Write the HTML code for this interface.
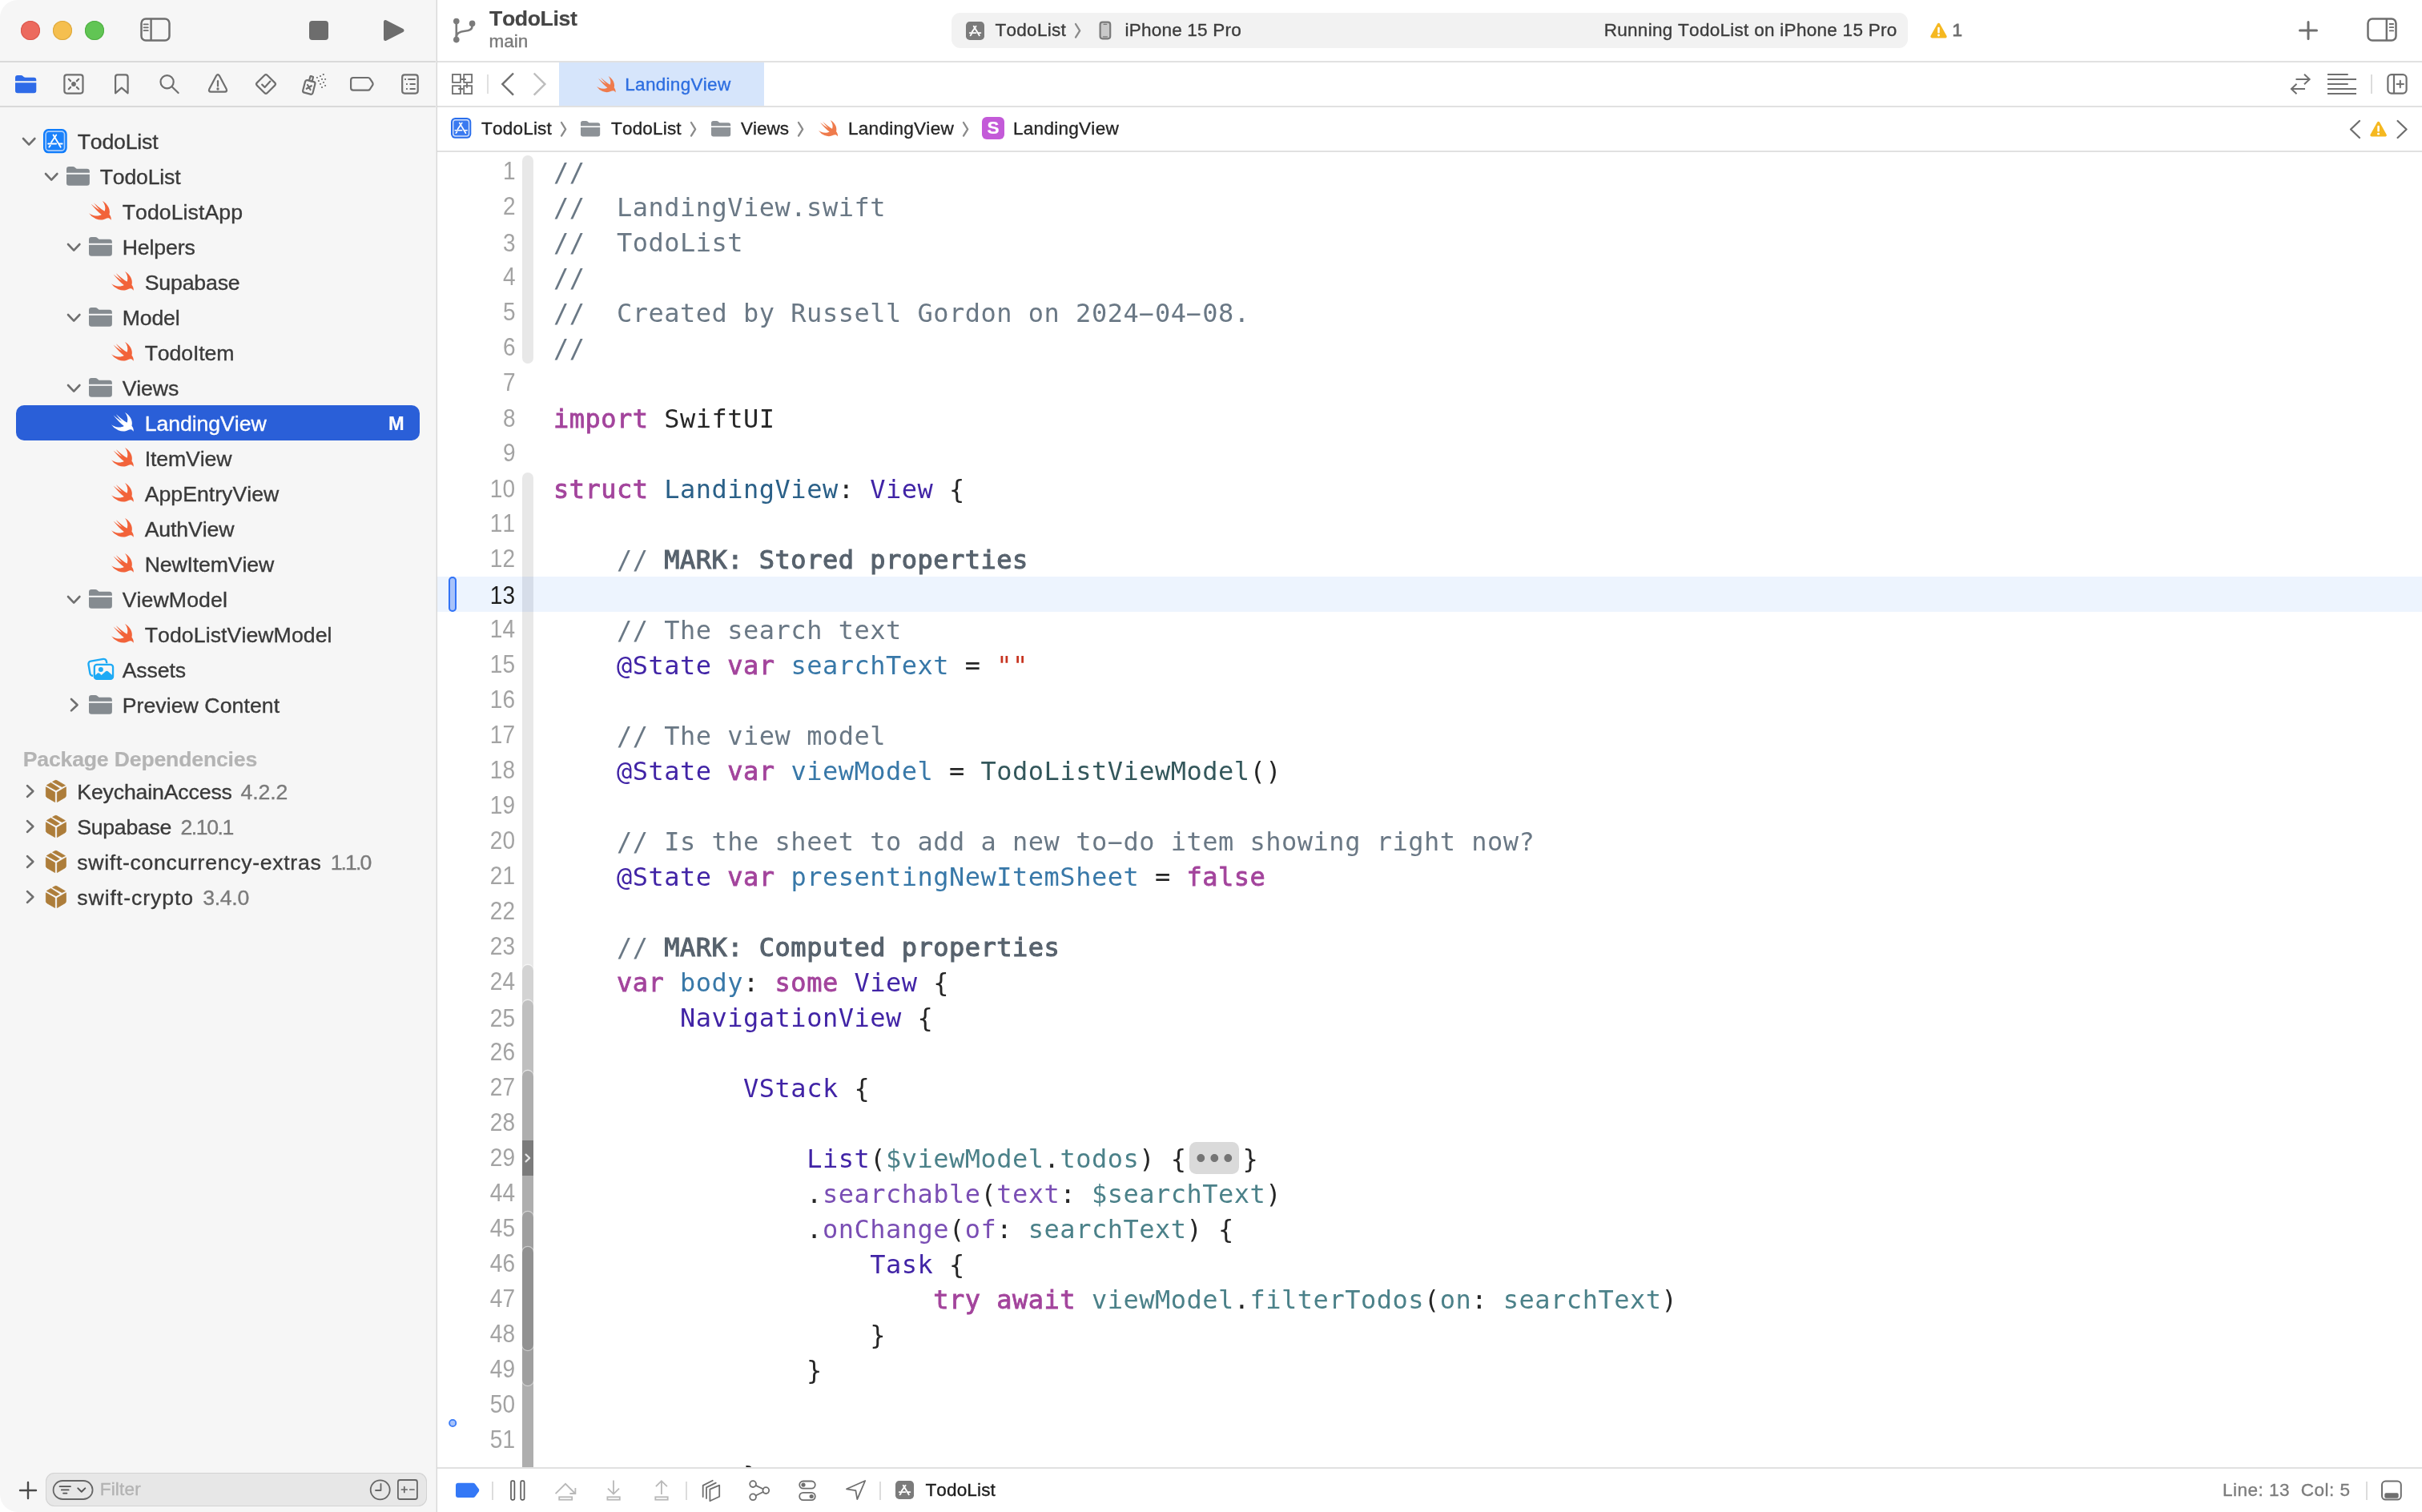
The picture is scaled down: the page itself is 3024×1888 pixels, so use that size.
<!DOCTYPE html>
<html lang="en"><head><meta charset="utf-8"><title>TodoList — LandingView.swift</title>
<style>
html,body{margin:0;padding:0;background:#fff;}
body{width:3024px;height:1888px;position:relative;overflow:hidden;font-family:"Liberation Sans",sans-serif;font-kerning:none;-webkit-font-smoothing:antialiased;}
.t{position:absolute;white-space:pre;}
.m{font-family:"DejaVu Sans Mono","Liberation Mono",monospace;}
svg{overflow:visible;}
#win{will-change:transform;position:absolute;left:0;top:0;width:3024px;height:1888px;border-radius:22px;overflow:hidden;background:#fff;}
.cl{position:absolute;left:0;white-space:pre;font-family:"DejaVu Sans Mono","Liberation Mono",monospace;font-size:32px;line-height:44px;height:44px;letter-spacing:0.499px;color:#262626;}
.cl b{font-weight:700;}
.hy{display:inline-block;transform:scaleX(2.0);}
.fold{display:inline-block;position:relative;width:69.9px;height:44px;vertical-align:top;letter-spacing:0;}
.fold i{position:absolute;left:3.6px;top:1px;width:62.2px;height:40px;border-radius:8.5px;background:#dadada;}
.fold em{position:absolute;left:11.6px;top:-1px;font:normal 36px/44px "Liberation Sans",sans-serif;letter-spacing:4.3px;color:#757575;}
.c{color:#6a7885}.mk{color:#57626d;font-weight:400;-webkit-text-stroke:1.1px #57626d}.k{color:#a3449c;font-weight:400;-webkit-text-stroke:0.8px #a3449c}.td{color:#2a6088}.od{color:#3878a8}
.st{color:#4124a6}.pc{color:#33575b}.pv{color:#4b8189}.sf{color:#7a4eb4}.s{color:#c7331f}
</style></head><body><div id="win">
<div style="position:absolute;left:0px;top:0px;width:545px;height:1888px;background:#f6f6f6;"></div>
<div style="position:absolute;left:544px;top:0px;width:1px;height:1888px;background:#ececec;"></div>
<div style="position:absolute;left:545px;top:0px;width:1px;height:1888px;background:#d6d6d6;"></div>
<div style="position:absolute;left:0px;top:76px;width:544px;height:2px;background:#d9d9d9;"></div>
<div style="position:absolute;left:546px;top:76px;width:2478px;height:2px;background:#e1e1e1;"></div>
<div style="position:absolute;left:0px;top:132px;width:544px;height:2px;background:#d9d9d9;"></div>
<div style="position:absolute;left:546px;top:132px;width:2478px;height:2px;background:#e1e1e1;"></div>
<div style="position:absolute;left:546px;top:188px;width:2478px;height:2px;background:#e1e1e1;"></div>
<div style="position:absolute;left:546px;top:1832px;width:2478px;height:2px;background:#e1e1e1;"></div>
<div style="position:absolute;left:26px;top:26px;width:24px;height:24px;background:#ec6a5e;border-radius:50%;box-shadow:inset 0 0 0 1px #d9574c;"></div>
<div style="position:absolute;left:66px;top:26px;width:24px;height:24px;background:#f5bf4f;border-radius:50%;box-shadow:inset 0 0 0 1px #dca73d;"></div>
<div style="position:absolute;left:106px;top:26px;width:24px;height:24px;background:#61c554;border-radius:50%;box-shadow:inset 0 0 0 1px #4fae43;"></div>
<svg style="position:absolute;left:175px;top:22px;" width="38" height="30" viewBox="0 0 38 30" preserveAspectRatio="none"><rect x="1.5" y="1.5" width="35" height="27" rx="5.5" fill="none" stroke="#6f6f6f" stroke-width="2.5"/><path d="M13.6,1.5 V28.5" stroke="#6f6f6f" stroke-width="2.4"/><path d="M4.6,8.4 H9.8 M4.6,12.3 H9.8 M4.6,16.2 H9.8" stroke="#6f6f6f" stroke-width="1.8" stroke-linecap="round"/></svg>
<div style="position:absolute;left:386px;top:26px;width:24px;height:24px;background:#6d6d6d;border-radius:4px;"></div>
<svg style="position:absolute;left:476px;top:22px;" width="32" height="32" viewBox="476 22 32 32" preserveAspectRatio="none"><path d="M481.2,27.2 L481.2,48.8 L502.3,38 Z" fill="#6d6d6d" stroke="#6d6d6d" stroke-width="4.4" stroke-linejoin="round"/></svg>
<svg style="position:absolute;left:562px;top:20px;" width="36" height="38" viewBox="562 20 36 38" preserveAspectRatio="none"><g fill="none" stroke="#7b7b7b" stroke-width="2.6" stroke-linecap="round"><path d="M569.8,27 V49"/><path d="M589.6,30 V32.4 C589.6,37 586,38.3 580.5,38.8 C574,39.4 569.8,40.8 569.8,46"/></g><circle cx="569.8" cy="26.6" r="3.8" fill="#7b7b7b"/><circle cx="589.6" cy="29.4" r="3.8" fill="#7b7b7b"/><circle cx="569.8" cy="49.6" r="3.8" fill="#7b7b7b"/></svg>
<span class="t " style="left:611.00px;top:-2.63px;font-size:26.65px;line-height:52px;color:#464646;font-weight:700;letter-spacing:-0.374px;-webkit-text-stroke:0.2px #464646;">TodoList</span>
<span class="t " style="left:610.50px;top:30.49px;font-size:22.55px;line-height:44px;color:#7a7a7a;font-weight:400;letter-spacing:-0.019px;-webkit-text-stroke:0.35px #7a7a7a;">main</span>
<div style="position:absolute;left:1188px;top:16px;width:1194px;height:44px;background:#f2f2f2;border-radius:11px;"></div>
<svg style="position:absolute;left:1206px;top:27px;" width="23" height="23" viewBox="0 0 30 30" preserveAspectRatio="none"><rect x="0" y="0" width="30" height="30" rx="6.2" fill="#7b7b7b"/><g transform="translate(15 15) scale(1.0) translate(-15 -14.9)"><g fill="none" stroke="#fff" stroke-width="2.5" stroke-linecap="round"><path d="M10.1,16.6 L16.4,7.4"/><path d="M7.4,22.3 L8.9,20.5"/><path d="M12.7,7.4 L21.9,22.4"/><path d="M6.2,18.3 H16.3"/><path d="M20.2,18.3 H23.9"/></g></g></svg>
<span class="t " style="left:1242.50px;top:15.99px;font-size:22.55px;line-height:44px;color:#3c3c3c;font-weight:400;letter-spacing:0.251px;-webkit-text-stroke:0.35px #3c3c3c;">TodoList</span>
<svg style="position:absolute;left:1341.2px;top:28.2px;" width="9.2" height="20.6" viewBox="-4.6 -10.3 9.2 20.6" preserveAspectRatio="none"><path d="M-2.6,-8.3 L2.6,0 L-2.6,8.3" fill="none" stroke="#8a8a8a" stroke-width="2.3" stroke-linecap="round" stroke-linejoin="round"/></svg>
<svg style="position:absolute;left:1372px;top:26px;" width="16" height="24" viewBox="0 0 16 24" preserveAspectRatio="none"><rect x="1.6" y="1.7" width="12.6" height="20.6" rx="3" fill="#c9c9c9" stroke="#7a7a7a" stroke-width="2.2"/><path d="M6,4.3 H9.8" stroke="#7a7a7a" stroke-width="1.2" stroke-linecap="round"/><path d="M5.3,19.8 H10.5" stroke="#7a7a7a" stroke-width="1.2" stroke-linecap="round"/></svg>
<span class="t " style="left:1404.50px;top:15.99px;font-size:22.55px;line-height:44px;color:#3c3c3c;font-weight:400;letter-spacing:0.198px;-webkit-text-stroke:0.35px #3c3c3c;">iPhone 15 Pro</span>
<span class="t " style="left:2002.70px;top:15.99px;font-size:22.55px;line-height:44px;color:#3c3c3c;font-weight:400;letter-spacing:0.264px;-webkit-text-stroke:0.35px #3c3c3c;">Running TodoList on iPhone 15 Pro</span>
<svg style="position:absolute;left:2409.6px;top:27.5px;" width="21" height="20.4" viewBox="0 0 21 20.4" preserveAspectRatio="none"><path d="M10.5,2.6 L18.9,17.6 H2.1 Z" fill="#f5b820" stroke="#f5b820" stroke-width="3.6" stroke-linejoin="round"/><path d="M10.5,6.9 V12.2" stroke="#fff" stroke-width="2.5" stroke-linecap="round"/><circle cx="10.5" cy="16" r="1.45" fill="#fff"/></svg>
<span class="t " style="left:2437.50px;top:15.99px;font-size:22.55px;line-height:44px;color:#6e6e6e;font-weight:400;letter-spacing:-0.306px;-webkit-text-stroke:0.8px #6e6e6e;">1</span>
<svg style="position:absolute;left:2868px;top:24px;" width="28" height="28" viewBox="-14 -14 28 28" preserveAspectRatio="none"><path d="M-10.5,0 H10.5 M0,-10.5 V10.5" stroke="#6f6f6f" stroke-width="3" stroke-linecap="round"/></svg>
<svg style="position:absolute;left:2955px;top:22px;" width="38" height="30" viewBox="0 0 38 30" preserveAspectRatio="none"><rect x="1.5" y="1.5" width="35" height="27" rx="5.5" fill="none" stroke="#6f6f6f" stroke-width="2.5"/><path d="M24.8,1.5 V28.5" stroke="#6f6f6f" stroke-width="2.4"/><path d="M28.6,8.0 H33.2 M28.6,12.2 H33.2 M28.6,16.4 H33.2" stroke="#6f6f6f" stroke-width="1.8" stroke-linecap="round"/></svg>
<svg style="position:absolute;left:18.7px;top:93.7px;" width="26.3" height="22.3" viewBox="0 0 26.3 22.3" preserveAspectRatio="none"><path d="M0,3 Q0,0 3,0 H7.2 Q8.6,0 9.6,0.9 L10.6,1.9 Q11.5,2.7 12.8,2.7 H23.3 Q26.3,2.7 26.3,5.7 V19.3 Q26.3,22.3 23.3,22.3 H3 Q0,22.3 0,19.3 Z" fill="#2f6be8"/><path d="M-1,8.3 H27.3" stroke="#f6f6f6" stroke-width="1.9" fill="none"/></svg>
<svg style="position:absolute;left:78px;top:91px;" width="28" height="28" viewBox="78 91 28 28" preserveAspectRatio="none"><rect x="80.4" y="93.3" width="23.1" height="23.3" rx="3" fill="none" stroke="#6f6f6f" stroke-width="2.2" stroke-linecap="round" stroke-linejoin="round"/><circle cx="92" cy="105" r="2.9" fill="#6f6f6f"/><path d="M85.8,98.8 L88.1,101.1 M98.2,98.8 L95.9,101.1 M85.8,111.2 L88.1,108.9 M98.2,111.2 L95.9,108.9" fill="none" stroke="#6f6f6f" stroke-width="2.2" stroke-linecap="round" stroke-linejoin="round" stroke-width="2"/></svg>
<svg style="position:absolute;left:141px;top:90px;" width="22" height="30" viewBox="141 90 22 30" preserveAspectRatio="none"><path d="M144.1,96 Q144.1,93.3 146.8,93.3 H156.9 Q159.6,93.3 159.6,96 V116.3 L151.85,109.7 L144.1,116.3 Z" fill="none" stroke="#6f6f6f" stroke-width="2.2" stroke-linecap="round" stroke-linejoin="round"/></svg>
<svg style="position:absolute;left:197px;top:90px;" width="30" height="30" viewBox="197 90 30 30" preserveAspectRatio="none"><circle cx="208.6" cy="102.2" r="8.1" fill="none" stroke="#6f6f6f" stroke-width="2.2" stroke-linecap="round" stroke-linejoin="round" stroke-width="2.4"/><path d="M214.9,108.5 L222.6,116" fill="none" stroke="#6f6f6f" stroke-width="2.2" stroke-linecap="round" stroke-linejoin="round" stroke-width="3.5"/></svg>
<svg style="position:absolute;left:258px;top:90px;" width="28" height="28" viewBox="258 90 28 28" preserveAspectRatio="none"><path d="M270.1,94.6 Q272,91.6 273.9,94.6 L282.6,110.9 Q284,114.5 280.7,114.6 H263.3 Q260,114.5 261.4,110.9 Z" fill="none" stroke="#6f6f6f" stroke-width="2.2" stroke-linecap="round" stroke-linejoin="round"/><path d="M272,101.2 V107.4" fill="none" stroke="#6f6f6f" stroke-width="2.2" stroke-linecap="round" stroke-linejoin="round" stroke-width="2.7"/><circle cx="272" cy="111" r="1.65" fill="#6f6f6f"/></svg>
<svg style="position:absolute;left:317px;top:90px;" width="30" height="30" viewBox="317 90 30 30" preserveAspectRatio="none"><path d="M330.3,94 Q332,92.3 333.7,94 L343.2,103.4 Q344.8,105 343.2,106.6 L333.7,116 Q332,117.7 330.3,116 L320.8,106.6 Q319.2,105 320.8,103.4 Z" fill="none" stroke="#6f6f6f" stroke-width="2.2" stroke-linecap="round" stroke-linejoin="round"/><path d="M327.2,105.6 L330.6,109 L337.4,101.6" fill="none" stroke="#6f6f6f" stroke-width="2.2" stroke-linecap="round" stroke-linejoin="round"/></svg>
<svg style="position:absolute;left:376px;top:90px;" width="34" height="30" viewBox="376 90 34 30" preserveAspectRatio="none"><g transform="rotate(14.6 385.8 108.9)"><rect x="379.45" y="100.9" width="12.7" height="16" rx="2.4" fill="none" stroke="#6f6f6f" stroke-width="2.2" stroke-linecap="round" stroke-linejoin="round"/><rect x="384.0" y="95.0" width="3.7" height="5.9" rx="0.6" fill="none" stroke="#6f6f6f" stroke-width="2.2" stroke-linecap="round" stroke-linejoin="round" stroke-width="1.9"/><path d="M383.3,106.5 L388.3,111.5 M388.3,106.5 L383.3,111.5" fill="none" stroke="#6f6f6f" stroke-width="2.2" stroke-linecap="round" stroke-linejoin="round" stroke-width="1.9"/></g><rect x="402.85" y="92.05" width="1.9" height="1.9" rx="0.4" fill="#6f6f6f"/><rect x="399.05" y="94.05" width="1.9" height="1.9" rx="0.4" fill="#6f6f6f"/><rect x="394.95" y="95.95" width="1.9" height="1.9" rx="0.4" fill="#6f6f6f"/><rect x="401.05" y="97.95" width="1.9" height="1.9" rx="0.4" fill="#6f6f6f"/><rect x="405.15000000000003" y="97.95" width="1.9" height="1.9" rx="0.4" fill="#6f6f6f"/><rect x="396.95" y="100.05" width="1.9" height="1.9" rx="0.4" fill="#6f6f6f"/><rect x="403.05" y="101.95" width="1.9" height="1.9" rx="0.4" fill="#6f6f6f"/><rect x="399.05" y="103.95" width="1.9" height="1.9" rx="0.4" fill="#6f6f6f"/><rect x="405.15000000000003" y="105.95" width="1.9" height="1.9" rx="0.4" fill="#6f6f6f"/><rect x="401.05" y="108.05" width="1.9" height="1.9" rx="0.4" fill="#6f6f6f"/></svg>
<svg style="position:absolute;left:435px;top:93px;" width="34" height="24" viewBox="435 93 34 24" preserveAspectRatio="none"><path d="M441,97 H459.6 Q461,97 461.8,98.1 L465.3,103.4 Q466,104.8 465.3,106.2 L461.8,111.5 Q461,112.6 459.6,112.6 H441 Q438.1,112.6 438.1,109.7 V99.9 Q438.1,97 441,97 Z" fill="none" stroke="#6f6f6f" stroke-width="2.2" stroke-linecap="round" stroke-linejoin="round"/></svg>
<svg style="position:absolute;left:499px;top:90px;" width="26" height="30" viewBox="499 90 26 30" preserveAspectRatio="none"><rect x="502.2" y="93.3" width="19.5" height="23.3" rx="3" fill="none" stroke="#6f6f6f" stroke-width="2.2" stroke-linecap="round" stroke-linejoin="round"/><path d="M509.3,99 H518.7 M511.6,105 H518.7 M511.6,111 H518.7" fill="none" stroke="#6f6f6f" stroke-width="1.9"/><rect x="505.1" y="98.05" width="1.9" height="1.9" fill="#6f6f6f"/><rect x="507" y="104.05" width="1.9" height="1.9" fill="#6f6f6f"/><rect x="507" y="110.05" width="1.9" height="1.9" fill="#6f6f6f"/></svg>
<svg style="position:absolute;left:562px;top:90px;" width="30" height="30" viewBox="562 90 30 30" preserveAspectRatio="none"><rect x="565" y="93" width="9.9" height="9.9" fill="none" stroke="#6f6f6f" stroke-width="1.8" stroke-linejoin="miter"/><rect x="579.2" y="93" width="9.9" height="9.9" fill="none" stroke="#6f6f6f" stroke-width="1.8" stroke-linejoin="miter"/><rect x="565" y="107.2" width="9.9" height="9.9" fill="none" stroke="#6f6f6f" stroke-width="1.8" stroke-linejoin="miter"/><rect x="579.2" y="107.2" width="9.9" height="9.9" fill="none" stroke="#6f6f6f" stroke-width="1.8" stroke-linejoin="miter"/><path d="M575.8,99 H581.8 M583,103.8 V109.8 M572.2,111 H578.3" fill="none" stroke="#6f6f6f" stroke-width="1.8" stroke-linejoin="miter"/></svg>
<div style="position:absolute;left:608.2px;top:93px;width:1.7px;height:24px;background:#e0e0e0;"></div>
<svg style="position:absolute;left:622px;top:88px;" width="24" height="34" viewBox="622 88 24 34" preserveAspectRatio="none"><path d="M641,91.5 L627.3,105.1 L641,118.7" fill="none" stroke="#6f6f6f" stroke-width="2.4" stroke-linecap="butt" stroke-linejoin="miter"/></svg>
<svg style="position:absolute;left:662px;top:88px;" width="24" height="34" viewBox="662 88 24 34" preserveAspectRatio="none"><path d="M666.7,91.5 L680.4,105.1 L666.7,118.7" fill="none" stroke="#bdbdbd" stroke-width="2.4" stroke-linecap="butt" stroke-linejoin="miter"/></svg>
<div style="position:absolute;left:698px;top:78px;width:256px;height:54px;background:#d6e5fb;"></div>
<svg style="position:absolute;left:745.3px;top:95px;" width="24" height="21.2" viewBox="2.4 3.4 18.4 17.0" preserveAspectRatio="none"><path d="M13.543 3.41c4.114 2.47 6.545 7.162 5.549 11.131-.024.093-.05.181-.076.272l.002.001c2.062 2.538 1.5 5.258 1.236 4.745-1.072-2.086-3.066-1.568-4.088-1.043a6.803 6.803 0 0 1-.281.158l-.02.012-.002.002c-2.115 1.123-4.957 1.205-7.812-.022a12.568 12.568 0 0 1-5.64-4.838c.649.48 1.35.902 2.097 1.252 3.019 1.414 6.051 1.311 8.197-.002C9.651 12.73 7.101 9.67 5.146 7.191a10.628 10.628 0 0 1-1.005-1.384c2.34 2.142 6.038 4.83 7.365 5.576C8.69 8.408 6.208 4.743 6.324 4.86c4.436 4.47 8.528 6.996 8.528 6.996.154.085.27.154.36.213.085-.215.16-.437.224-.668.708-2.588-.09-5.548-1.893-7.992z" fill="#ef7b4c"/></svg>
<span class="t " style="left:780.30px;top:83.69px;font-size:22.55px;line-height:44px;color:#2d6ee0;font-weight:400;letter-spacing:0.279px;-webkit-text-stroke:0.35px #2d6ee0;">LandingView</span>
<svg style="position:absolute;left:2858px;top:90px;" width="30" height="30" viewBox="2858 90 30 30" preserveAspectRatio="none"><path d="M2866.5,99 H2883.5 M2877,92.8 L2883.6,99 L2877,105.2 M2878,111 H2861 M2867.5,104.8 L2860.9,111 L2867.5,117.2" fill="none" stroke="#6f6f6f" stroke-width="2" stroke-linecap="butt" stroke-linejoin="miter"/></svg>
<svg style="position:absolute;left:2904px;top:90px;" width="40" height="30" viewBox="2904 90 40 30" preserveAspectRatio="none"><path d="M2906,93 H2931.7 M2906,99 H2942 M2906,105 H2931.7 M2906,111 H2942 M2906,117 H2942" fill="none" stroke="#6f6f6f" stroke-width="2"/></svg>
<div style="position:absolute;left:2960px;top:93px;width:2px;height:24px;background:#dcdcdc;"></div>
<svg style="position:absolute;left:2978px;top:90px;" width="30" height="30" viewBox="2978 90 30 30" preserveAspectRatio="none"><rect x="2981.4" y="93.2" width="23.2" height="23.4" rx="4.5" fill="none" stroke="#6f6f6f" stroke-width="2.2"/><path d="M2989,93.2 V116.6" stroke="#6f6f6f" stroke-width="2.2"/><path d="M2992.6,105 H3001 M2996.8,100.8 V109.2" stroke="#6f6f6f" stroke-width="2" stroke-linecap="round"/></svg>
<svg style="position:absolute;left:563.1px;top:147.4px;" width="25.3" height="25.8" viewBox="0 0 30 30" preserveAspectRatio="none"><rect x="0" y="0" width="30" height="30" rx="6.4" fill="#2a6eec"/><rect x="3.2" y="3.2" width="23.6" height="23.6" rx="3.6" fill="#3a7af0" stroke="#d4e2fb" stroke-width="1.7"/><g fill="none" stroke="#fff" stroke-width="1.9" stroke-linecap="round"><path d="M10.1,16.6 L16.4,7.4"/><path d="M7.4,22.3 L8.9,20.5"/><path d="M12.7,7.4 L21.9,22.4"/><path d="M6.2,18.3 H16.3"/><path d="M20.2,18.3 H23.9"/></g></svg>
<span class="t " style="left:601.00px;top:138.79px;font-size:22.55px;line-height:44px;color:#262626;font-weight:400;letter-spacing:0.189px;-webkit-text-stroke:0.35px #262626;">TodoList</span>
<svg style="position:absolute;left:698.9px;top:150.7px;" width="9.2" height="20.6" viewBox="-4.6 -10.3 9.2 20.6" preserveAspectRatio="none"><path d="M-2.6,-8.3 L2.6,0 L-2.6,8.3" fill="none" stroke="#8a8a8a" stroke-width="2.3" stroke-linecap="round" stroke-linejoin="round"/></svg>
<svg style="position:absolute;left:725.4px;top:150.5px;" width="24.2" height="19.4" viewBox="0 0 26.3 22.3" preserveAspectRatio="none"><path d="M0,3 Q0,0 3,0 H7.2 Q8.6,0 9.6,0.9 L10.6,1.9 Q11.5,2.7 12.8,2.7 H23.3 Q26.3,2.7 26.3,5.7 V19.3 Q26.3,22.3 23.3,22.3 H3 Q0,22.3 0,19.3 Z" fill="#8d9297"/><path d="M-1,8.3 H27.3" stroke="#fff" stroke-width="1.9" fill="none"/></svg>
<span class="t " style="left:763.00px;top:138.79px;font-size:22.55px;line-height:44px;color:#262626;font-weight:400;letter-spacing:0.164px;-webkit-text-stroke:0.35px #262626;">TodoList</span>
<svg style="position:absolute;left:861.4px;top:150.7px;" width="9.2" height="20.6" viewBox="-4.6 -10.3 9.2 20.6" preserveAspectRatio="none"><path d="M-2.6,-8.3 L2.6,0 L-2.6,8.3" fill="none" stroke="#8a8a8a" stroke-width="2.3" stroke-linecap="round" stroke-linejoin="round"/></svg>
<svg style="position:absolute;left:887.7px;top:150.5px;" width="24.2" height="19.4" viewBox="0 0 26.3 22.3" preserveAspectRatio="none"><path d="M0,3 Q0,0 3,0 H7.2 Q8.6,0 9.6,0.9 L10.6,1.9 Q11.5,2.7 12.8,2.7 H23.3 Q26.3,2.7 26.3,5.7 V19.3 Q26.3,22.3 23.3,22.3 H3 Q0,22.3 0,19.3 Z" fill="#8d9297"/><path d="M-1,8.3 H27.3" stroke="#fff" stroke-width="1.9" fill="none"/></svg>
<span class="t " style="left:924.90px;top:138.79px;font-size:22.55px;line-height:44px;color:#262626;font-weight:400;letter-spacing:-0.030px;-webkit-text-stroke:0.35px #262626;">Views</span>
<svg style="position:absolute;left:994.9px;top:150.7px;" width="9.2" height="20.6" viewBox="-4.6 -10.3 9.2 20.6" preserveAspectRatio="none"><path d="M-2.6,-8.3 L2.6,0 L-2.6,8.3" fill="none" stroke="#8a8a8a" stroke-width="2.3" stroke-linecap="round" stroke-linejoin="round"/></svg>
<svg style="position:absolute;left:1021.5px;top:150.3px;" width="24.4" height="21.2" viewBox="2.4 3.4 18.4 17.0" preserveAspectRatio="none"><path d="M13.543 3.41c4.114 2.47 6.545 7.162 5.549 11.131-.024.093-.05.181-.076.272l.002.001c2.062 2.538 1.5 5.258 1.236 4.745-1.072-2.086-3.066-1.568-4.088-1.043a6.803 6.803 0 0 1-.281.158l-.02.012-.002.002c-2.115 1.123-4.957 1.205-7.812-.022a12.568 12.568 0 0 1-5.64-4.838c.649.48 1.35.902 2.097 1.252 3.019 1.414 6.051 1.311 8.197-.002C9.651 12.73 7.101 9.67 5.146 7.191a10.628 10.628 0 0 1-1.005-1.384c2.34 2.142 6.038 4.83 7.365 5.576C8.69 8.408 6.208 4.743 6.324 4.86c4.436 4.47 8.528 6.996 8.528 6.996.154.085.27.154.36.213.085-.215.16-.437.224-.668.708-2.588-.09-5.548-1.893-7.992z" fill="#ef7b4c"/></svg>
<span class="t " style="left:1059.00px;top:138.79px;font-size:22.55px;line-height:44px;color:#262626;font-weight:400;letter-spacing:0.260px;-webkit-text-stroke:0.35px #262626;">LandingView</span>
<svg style="position:absolute;left:1201.2px;top:150.7px;" width="9.2" height="20.6" viewBox="-4.6 -10.3 9.2 20.6" preserveAspectRatio="none"><path d="M-2.6,-8.3 L2.6,0 L-2.6,8.3" fill="none" stroke="#8a8a8a" stroke-width="2.3" stroke-linecap="round" stroke-linejoin="round"/></svg>
<div style="position:absolute;left:1226px;top:146px;width:28px;height:28px;background:#c35ad8;border-radius:6px;"></div>
<span class="t " style="left:1232.60px;top:138.19px;font-size:22.55px;line-height:44px;color:#fff;font-weight:700;letter-spacing:-0.367px;-webkit-text-stroke:0.2px #fff;">S</span>
<span class="t " style="left:1265.00px;top:138.79px;font-size:22.55px;line-height:44px;color:#262626;font-weight:400;letter-spacing:0.260px;-webkit-text-stroke:0.35px #262626;">LandingView</span>
<svg style="position:absolute;left:2930px;top:146px;" width="22" height="32" viewBox="2930 146 22 32" preserveAspectRatio="none"><path d="M2946,151 L2935,161.5 L2946,172" fill="none" stroke="#6f6f6f" stroke-width="2.3" stroke-linecap="round" stroke-linejoin="round"/></svg>
<svg style="position:absolute;left:2959.4px;top:150.5px;" width="21.2" height="20.6" viewBox="0 0 21 20.4" preserveAspectRatio="none"><path d="M10.5,2.6 L18.9,17.6 H2.1 Z" fill="#f5b820" stroke="#f5b820" stroke-width="3.6" stroke-linejoin="round"/><path d="M10.5,6.9 V12.2" stroke="#fff" stroke-width="2.5" stroke-linecap="round"/><circle cx="10.5" cy="16" r="1.45" fill="#fff"/></svg>
<svg style="position:absolute;left:2988px;top:146px;" width="22" height="32" viewBox="2988 146 22 32" preserveAspectRatio="none"><path d="M2993.6,151 L3004.6,161.5 L2993.6,172" fill="none" stroke="#6f6f6f" stroke-width="2.3" stroke-linecap="round" stroke-linejoin="round"/></svg>
<svg style="position:absolute;left:26.8px;top:170.7px;" width="18.4" height="11.6" viewBox="-9.2 -5.8 18.4 11.6" preserveAspectRatio="none"><path d="M-7.2,-3.8 L0,3.8 L7.2,-3.8" fill="none" stroke="#6f6f6f" stroke-width="2.6" stroke-linecap="round" stroke-linejoin="round"/></svg>
<svg style="position:absolute;left:54.3px;top:160.8px;" width="29.7" height="30.3" viewBox="0 0 30 30" preserveAspectRatio="none"><rect x="0" y="0" width="30" height="30" rx="6.4" fill="#0f7cfb"/><rect x="3.2" y="3.2" width="23.6" height="23.6" rx="3.6" fill="#1a81fb" stroke="#a9cdfb" stroke-width="1.7"/><g fill="none" stroke="#fff" stroke-width="1.9" stroke-linecap="round"><path d="M10.1,16.6 L16.4,7.4"/><path d="M7.4,22.3 L8.9,20.5"/><path d="M12.7,7.4 L21.9,22.4"/><path d="M6.2,18.3 H16.3"/><path d="M20.2,18.3 H23.9"/></g></svg>
<span class="t " style="left:96.70px;top:150.87px;font-size:26.65px;line-height:52px;color:#3a3a3a;font-weight:400;letter-spacing:-0.177px;-webkit-text-stroke:0.35px #3a3a3a;">TodoList</span>
<svg style="position:absolute;left:54.8px;top:214.7px;" width="18.4" height="11.6" viewBox="-9.2 -5.8 18.4 11.6" preserveAspectRatio="none"><path d="M-7.2,-3.8 L0,3.8 L7.2,-3.8" fill="none" stroke="#6f6f6f" stroke-width="2.6" stroke-linecap="round" stroke-linejoin="round"/></svg>
<svg style="position:absolute;left:83.0px;top:208.1px;" width="28.9" height="23.7" viewBox="0 0 26.3 22.3" preserveAspectRatio="none"><path d="M0,3 Q0,0 3,0 H7.2 Q8.6,0 9.6,0.9 L10.6,1.9 Q11.5,2.7 12.8,2.7 H23.3 Q26.3,2.7 26.3,5.7 V19.3 Q26.3,22.3 23.3,22.3 H3 Q0,22.3 0,19.3 Z" fill="#858b90"/><path d="M-1,8.3 H27.3" stroke="#f6f6f6" stroke-width="1.9" fill="none"/></svg>
<span class="t " style="left:124.70px;top:194.87px;font-size:26.65px;line-height:52px;color:#3a3a3a;font-weight:400;letter-spacing:-0.177px;-webkit-text-stroke:0.35px #3a3a3a;">TodoList</span>
<svg style="position:absolute;left:110.69999999999999px;top:251px;" width="28.2" height="24.8" viewBox="2.4 3.4 18.4 17.0" preserveAspectRatio="none"><path d="M13.543 3.41c4.114 2.47 6.545 7.162 5.549 11.131-.024.093-.05.181-.076.272l.002.001c2.062 2.538 1.5 5.258 1.236 4.745-1.072-2.086-3.066-1.568-4.088-1.043a6.803 6.803 0 0 1-.281.158l-.02.012-.002.002c-2.115 1.123-4.957 1.205-7.812-.022a12.568 12.568 0 0 1-5.64-4.838c.649.48 1.35.902 2.097 1.252 3.019 1.414 6.051 1.311 8.197-.002C9.651 12.73 7.101 9.67 5.146 7.191a10.628 10.628 0 0 1-1.005-1.384c2.34 2.142 6.038 4.83 7.365 5.576C8.69 8.408 6.208 4.743 6.324 4.86c4.436 4.47 8.528 6.996 8.528 6.996.154.085.27.154.36.213.085-.215.16-.437.224-.668.708-2.588-.09-5.548-1.893-7.992z" fill="#f2633a"/></svg>
<span class="t " style="left:152.70px;top:238.87px;font-size:26.65px;line-height:52px;color:#3a3a3a;font-weight:400;letter-spacing:0.079px;-webkit-text-stroke:0.35px #3a3a3a;">TodoListApp</span>
<svg style="position:absolute;left:82.79999999999998px;top:302.7px;" width="18.4" height="11.6" viewBox="-9.2 -5.8 18.4 11.6" preserveAspectRatio="none"><path d="M-7.2,-3.8 L0,3.8 L7.2,-3.8" fill="none" stroke="#6f6f6f" stroke-width="2.6" stroke-linecap="round" stroke-linejoin="round"/></svg>
<svg style="position:absolute;left:110.99999999999999px;top:296.1px;" width="28.9" height="23.7" viewBox="0 0 26.3 22.3" preserveAspectRatio="none"><path d="M0,3 Q0,0 3,0 H7.2 Q8.6,0 9.6,0.9 L10.6,1.9 Q11.5,2.7 12.8,2.7 H23.3 Q26.3,2.7 26.3,5.7 V19.3 Q26.3,22.3 23.3,22.3 H3 Q0,22.3 0,19.3 Z" fill="#858b90"/><path d="M-1,8.3 H27.3" stroke="#f6f6f6" stroke-width="1.9" fill="none"/></svg>
<span class="t " style="left:152.70px;top:282.87px;font-size:26.65px;line-height:52px;color:#3a3a3a;font-weight:400;letter-spacing:-0.100px;-webkit-text-stroke:0.35px #3a3a3a;">Helpers</span>
<svg style="position:absolute;left:138.7px;top:339px;" width="28.2" height="24.8" viewBox="2.4 3.4 18.4 17.0" preserveAspectRatio="none"><path d="M13.543 3.41c4.114 2.47 6.545 7.162 5.549 11.131-.024.093-.05.181-.076.272l.002.001c2.062 2.538 1.5 5.258 1.236 4.745-1.072-2.086-3.066-1.568-4.088-1.043a6.803 6.803 0 0 1-.281.158l-.02.012-.002.002c-2.115 1.123-4.957 1.205-7.812-.022a12.568 12.568 0 0 1-5.64-4.838c.649.48 1.35.902 2.097 1.252 3.019 1.414 6.051 1.311 8.197-.002C9.651 12.73 7.101 9.67 5.146 7.191a10.628 10.628 0 0 1-1.005-1.384c2.34 2.142 6.038 4.83 7.365 5.576C8.69 8.408 6.208 4.743 6.324 4.86c4.436 4.47 8.528 6.996 8.528 6.996.154.085.27.154.36.213.085-.215.16-.437.224-.668.708-2.588-.09-5.548-1.893-7.992z" fill="#f2633a"/></svg>
<span class="t " style="left:180.70px;top:326.87px;font-size:26.65px;line-height:52px;color:#3a3a3a;font-weight:400;letter-spacing:-0.146px;-webkit-text-stroke:0.35px #3a3a3a;">Supabase</span>
<svg style="position:absolute;left:82.79999999999998px;top:390.7px;" width="18.4" height="11.6" viewBox="-9.2 -5.8 18.4 11.6" preserveAspectRatio="none"><path d="M-7.2,-3.8 L0,3.8 L7.2,-3.8" fill="none" stroke="#6f6f6f" stroke-width="2.6" stroke-linecap="round" stroke-linejoin="round"/></svg>
<svg style="position:absolute;left:110.99999999999999px;top:384.1px;" width="28.9" height="23.7" viewBox="0 0 26.3 22.3" preserveAspectRatio="none"><path d="M0,3 Q0,0 3,0 H7.2 Q8.6,0 9.6,0.9 L10.6,1.9 Q11.5,2.7 12.8,2.7 H23.3 Q26.3,2.7 26.3,5.7 V19.3 Q26.3,22.3 23.3,22.3 H3 Q0,22.3 0,19.3 Z" fill="#858b90"/><path d="M-1,8.3 H27.3" stroke="#f6f6f6" stroke-width="1.9" fill="none"/></svg>
<span class="t " style="left:152.70px;top:370.87px;font-size:26.65px;line-height:52px;color:#3a3a3a;font-weight:400;letter-spacing:-0.134px;-webkit-text-stroke:0.35px #3a3a3a;">Model</span>
<svg style="position:absolute;left:138.7px;top:427px;" width="28.2" height="24.8" viewBox="2.4 3.4 18.4 17.0" preserveAspectRatio="none"><path d="M13.543 3.41c4.114 2.47 6.545 7.162 5.549 11.131-.024.093-.05.181-.076.272l.002.001c2.062 2.538 1.5 5.258 1.236 4.745-1.072-2.086-3.066-1.568-4.088-1.043a6.803 6.803 0 0 1-.281.158l-.02.012-.002.002c-2.115 1.123-4.957 1.205-7.812-.022a12.568 12.568 0 0 1-5.64-4.838c.649.48 1.35.902 2.097 1.252 3.019 1.414 6.051 1.311 8.197-.002C9.651 12.73 7.101 9.67 5.146 7.191a10.628 10.628 0 0 1-1.005-1.384c2.34 2.142 6.038 4.83 7.365 5.576C8.69 8.408 6.208 4.743 6.324 4.86c4.436 4.47 8.528 6.996 8.528 6.996.154.085.27.154.36.213.085-.215.16-.437.224-.668.708-2.588-.09-5.548-1.893-7.992z" fill="#f2633a"/></svg>
<span class="t " style="left:180.70px;top:414.87px;font-size:26.65px;line-height:52px;color:#3a3a3a;font-weight:400;letter-spacing:-0.123px;-webkit-text-stroke:0.35px #3a3a3a;">TodoItem</span>
<svg style="position:absolute;left:82.79999999999998px;top:478.7px;" width="18.4" height="11.6" viewBox="-9.2 -5.8 18.4 11.6" preserveAspectRatio="none"><path d="M-7.2,-3.8 L0,3.8 L7.2,-3.8" fill="none" stroke="#6f6f6f" stroke-width="2.6" stroke-linecap="round" stroke-linejoin="round"/></svg>
<svg style="position:absolute;left:110.99999999999999px;top:472.1px;" width="28.9" height="23.7" viewBox="0 0 26.3 22.3" preserveAspectRatio="none"><path d="M0,3 Q0,0 3,0 H7.2 Q8.6,0 9.6,0.9 L10.6,1.9 Q11.5,2.7 12.8,2.7 H23.3 Q26.3,2.7 26.3,5.7 V19.3 Q26.3,22.3 23.3,22.3 H3 Q0,22.3 0,19.3 Z" fill="#858b90"/><path d="M-1,8.3 H27.3" stroke="#f6f6f6" stroke-width="1.9" fill="none"/></svg>
<span class="t " style="left:152.70px;top:458.87px;font-size:26.65px;line-height:52px;color:#3a3a3a;font-weight:400;letter-spacing:-0.127px;-webkit-text-stroke:0.35px #3a3a3a;">Views</span>
<div style="position:absolute;left:20px;top:506px;width:504px;height:44px;background:#2a5fd8;border-radius:10px;"></div>
<svg style="position:absolute;left:138.7px;top:515px;" width="28.2" height="24.8" viewBox="2.4 3.4 18.4 17.0" preserveAspectRatio="none"><path d="M13.543 3.41c4.114 2.47 6.545 7.162 5.549 11.131-.024.093-.05.181-.076.272l.002.001c2.062 2.538 1.5 5.258 1.236 4.745-1.072-2.086-3.066-1.568-4.088-1.043a6.803 6.803 0 0 1-.281.158l-.02.012-.002.002c-2.115 1.123-4.957 1.205-7.812-.022a12.568 12.568 0 0 1-5.64-4.838c.649.48 1.35.902 2.097 1.252 3.019 1.414 6.051 1.311 8.197-.002C9.651 12.73 7.101 9.67 5.146 7.191a10.628 10.628 0 0 1-1.005-1.384c2.34 2.142 6.038 4.83 7.365 5.576C8.69 8.408 6.208 4.743 6.324 4.86c4.436 4.47 8.528 6.996 8.528 6.996.154.085.27.154.36.213.085-.215.16-.437.224-.668.708-2.588-.09-5.548-1.893-7.992z" fill="#fff"/></svg>
<span class="t " style="left:180.70px;top:502.87px;font-size:26.65px;line-height:52px;color:#fff;font-weight:400;letter-spacing:-0.056px;-webkit-text-stroke:0.35px #fff;">LandingView</span>
<svg style="position:absolute;left:138.7px;top:559px;" width="28.2" height="24.8" viewBox="2.4 3.4 18.4 17.0" preserveAspectRatio="none"><path d="M13.543 3.41c4.114 2.47 6.545 7.162 5.549 11.131-.024.093-.05.181-.076.272l.002.001c2.062 2.538 1.5 5.258 1.236 4.745-1.072-2.086-3.066-1.568-4.088-1.043a6.803 6.803 0 0 1-.281.158l-.02.012-.002.002c-2.115 1.123-4.957 1.205-7.812-.022a12.568 12.568 0 0 1-5.64-4.838c.649.48 1.35.902 2.097 1.252 3.019 1.414 6.051 1.311 8.197-.002C9.651 12.73 7.101 9.67 5.146 7.191a10.628 10.628 0 0 1-1.005-1.384c2.34 2.142 6.038 4.83 7.365 5.576C8.69 8.408 6.208 4.743 6.324 4.86c4.436 4.47 8.528 6.996 8.528 6.996.154.085.27.154.36.213.085-.215.16-.437.224-.668.708-2.588-.09-5.548-1.893-7.992z" fill="#f2633a"/></svg>
<span class="t " style="left:180.70px;top:546.87px;font-size:26.65px;line-height:52px;color:#3a3a3a;font-weight:400;letter-spacing:-0.114px;-webkit-text-stroke:0.35px #3a3a3a;">ItemView</span>
<svg style="position:absolute;left:138.7px;top:603px;" width="28.2" height="24.8" viewBox="2.4 3.4 18.4 17.0" preserveAspectRatio="none"><path d="M13.543 3.41c4.114 2.47 6.545 7.162 5.549 11.131-.024.093-.05.181-.076.272l.002.001c2.062 2.538 1.5 5.258 1.236 4.745-1.072-2.086-3.066-1.568-4.088-1.043a6.803 6.803 0 0 1-.281.158l-.02.012-.002.002c-2.115 1.123-4.957 1.205-7.812-.022a12.568 12.568 0 0 1-5.64-4.838c.649.48 1.35.902 2.097 1.252 3.019 1.414 6.051 1.311 8.197-.002C9.651 12.73 7.101 9.67 5.146 7.191a10.628 10.628 0 0 1-1.005-1.384c2.34 2.142 6.038 4.83 7.365 5.576C8.69 8.408 6.208 4.743 6.324 4.86c4.436 4.47 8.528 6.996 8.528 6.996.154.085.27.154.36.213.085-.215.16-.437.224-.668.708-2.588-.09-5.548-1.893-7.992z" fill="#f2633a"/></svg>
<span class="t " style="left:180.70px;top:590.87px;font-size:26.65px;line-height:52px;color:#3a3a3a;font-weight:400;letter-spacing:0.018px;-webkit-text-stroke:0.35px #3a3a3a;">AppEntryView</span>
<svg style="position:absolute;left:138.7px;top:647px;" width="28.2" height="24.8" viewBox="2.4 3.4 18.4 17.0" preserveAspectRatio="none"><path d="M13.543 3.41c4.114 2.47 6.545 7.162 5.549 11.131-.024.093-.05.181-.076.272l.002.001c2.062 2.538 1.5 5.258 1.236 4.745-1.072-2.086-3.066-1.568-4.088-1.043a6.803 6.803 0 0 1-.281.158l-.02.012-.002.002c-2.115 1.123-4.957 1.205-7.812-.022a12.568 12.568 0 0 1-5.64-4.838c.649.48 1.35.902 2.097 1.252 3.019 1.414 6.051 1.311 8.197-.002C9.651 12.73 7.101 9.67 5.146 7.191a10.628 10.628 0 0 1-1.005-1.384c2.34 2.142 6.038 4.83 7.365 5.576C8.69 8.408 6.208 4.743 6.324 4.86c4.436 4.47 8.528 6.996 8.528 6.996.154.085.27.154.36.213.085-.215.16-.437.224-.668.708-2.588-.09-5.548-1.893-7.992z" fill="#f2633a"/></svg>
<span class="t " style="left:180.70px;top:634.87px;font-size:26.65px;line-height:52px;color:#3a3a3a;font-weight:400;letter-spacing:-0.123px;-webkit-text-stroke:0.35px #3a3a3a;">AuthView</span>
<svg style="position:absolute;left:138.7px;top:691px;" width="28.2" height="24.8" viewBox="2.4 3.4 18.4 17.0" preserveAspectRatio="none"><path d="M13.543 3.41c4.114 2.47 6.545 7.162 5.549 11.131-.024.093-.05.181-.076.272l.002.001c2.062 2.538 1.5 5.258 1.236 4.745-1.072-2.086-3.066-1.568-4.088-1.043a6.803 6.803 0 0 1-.281.158l-.02.012-.002.002c-2.115 1.123-4.957 1.205-7.812-.022a12.568 12.568 0 0 1-5.64-4.838c.649.48 1.35.902 2.097 1.252 3.019 1.414 6.051 1.311 8.197-.002C9.651 12.73 7.101 9.67 5.146 7.191a10.628 10.628 0 0 1-1.005-1.384c2.34 2.142 6.038 4.83 7.365 5.576C8.69 8.408 6.208 4.743 6.324 4.86c4.436 4.47 8.528 6.996 8.528 6.996.154.085.27.154.36.213.085-.215.16-.437.224-.668.708-2.588-.09-5.548-1.893-7.992z" fill="#f2633a"/></svg>
<span class="t " style="left:180.70px;top:678.87px;font-size:26.65px;line-height:52px;color:#3a3a3a;font-weight:400;letter-spacing:-0.141px;-webkit-text-stroke:0.35px #3a3a3a;">NewItemView</span>
<svg style="position:absolute;left:82.79999999999998px;top:742.7px;" width="18.4" height="11.6" viewBox="-9.2 -5.8 18.4 11.6" preserveAspectRatio="none"><path d="M-7.2,-3.8 L0,3.8 L7.2,-3.8" fill="none" stroke="#6f6f6f" stroke-width="2.6" stroke-linecap="round" stroke-linejoin="round"/></svg>
<svg style="position:absolute;left:110.99999999999999px;top:736.1px;" width="28.9" height="23.7" viewBox="0 0 26.3 22.3" preserveAspectRatio="none"><path d="M0,3 Q0,0 3,0 H7.2 Q8.6,0 9.6,0.9 L10.6,1.9 Q11.5,2.7 12.8,2.7 H23.3 Q26.3,2.7 26.3,5.7 V19.3 Q26.3,22.3 23.3,22.3 H3 Q0,22.3 0,19.3 Z" fill="#858b90"/><path d="M-1,8.3 H27.3" stroke="#f6f6f6" stroke-width="1.9" fill="none"/></svg>
<span class="t " style="left:152.70px;top:722.87px;font-size:26.65px;line-height:52px;color:#3a3a3a;font-weight:400;letter-spacing:0.106px;-webkit-text-stroke:0.35px #3a3a3a;">ViewModel</span>
<svg style="position:absolute;left:138.7px;top:779px;" width="28.2" height="24.8" viewBox="2.4 3.4 18.4 17.0" preserveAspectRatio="none"><path d="M13.543 3.41c4.114 2.47 6.545 7.162 5.549 11.131-.024.093-.05.181-.076.272l.002.001c2.062 2.538 1.5 5.258 1.236 4.745-1.072-2.086-3.066-1.568-4.088-1.043a6.803 6.803 0 0 1-.281.158l-.02.012-.002.002c-2.115 1.123-4.957 1.205-7.812-.022a12.568 12.568 0 0 1-5.64-4.838c.649.48 1.35.902 2.097 1.252 3.019 1.414 6.051 1.311 8.197-.002C9.651 12.73 7.101 9.67 5.146 7.191a10.628 10.628 0 0 1-1.005-1.384c2.34 2.142 6.038 4.83 7.365 5.576C8.69 8.408 6.208 4.743 6.324 4.86c4.436 4.47 8.528 6.996 8.528 6.996.154.085.27.154.36.213.085-.215.16-.437.224-.668.708-2.588-.09-5.548-1.893-7.992z" fill="#f2633a"/></svg>
<span class="t " style="left:180.70px;top:766.87px;font-size:26.65px;line-height:52px;color:#3a3a3a;font-weight:400;letter-spacing:0.084px;-webkit-text-stroke:0.35px #3a3a3a;">TodoListViewModel</span>
<svg style="position:absolute;left:100px;top:810px;" width="46" height="44" viewBox="0 0 46 44" preserveAspectRatio="none"><g transform="rotate(-9.5 22.2 23.4)"><rect x="11.3" y="14.2" width="22.7" height="18.4" rx="3.4" fill="none" stroke="#1eaaf5" stroke-width="2.4"/></g><rect x="16.2" y="18.3" width="26.5" height="21.2" rx="4.4" fill="#f6f6f6"/><rect x="17.85" y="19.95" width="23.2" height="17.9" rx="3.1" fill="#f6f6f6" stroke="#1eaaf5" stroke-width="2.3"/><circle cx="25.9" cy="26" r="3" fill="#1eaaf5"/><path d="M18.5,33.4 L21.9,30.6 Q23.1,29.8 24.3,30.7 L26.6,32.9 L32,28.3 Q33.4,27.3 34.8,28.3 L40.4,33.3 V35.2 Q40.4,37.2 38.4,37.2 H20.5 Q18.5,37.2 18.5,35.2 Z" fill="#1eaaf5"/></svg>
<span class="t " style="left:152.70px;top:810.87px;font-size:26.65px;line-height:52px;color:#3a3a3a;font-weight:400;letter-spacing:-0.105px;-webkit-text-stroke:0.35px #3a3a3a;">Assets</span>
<svg style="position:absolute;left:87.19999999999999px;top:870.8px;" width="11.6" height="18.4" viewBox="-5.8 -9.2 11.6 18.4" preserveAspectRatio="none"><path d="M-3.8,-7.2 L3.8,0 L-3.8,7.2" fill="none" stroke="#6f6f6f" stroke-width="2.6" stroke-linecap="round" stroke-linejoin="round"/></svg>
<svg style="position:absolute;left:110.99999999999999px;top:868.1px;" width="28.9" height="23.7" viewBox="0 0 26.3 22.3" preserveAspectRatio="none"><path d="M0,3 Q0,0 3,0 H7.2 Q8.6,0 9.6,0.9 L10.6,1.9 Q11.5,2.7 12.8,2.7 H23.3 Q26.3,2.7 26.3,5.7 V19.3 Q26.3,22.3 23.3,22.3 H3 Q0,22.3 0,19.3 Z" fill="#858b90"/><path d="M-1,8.3 H27.3" stroke="#f6f6f6" stroke-width="1.9" fill="none"/></svg>
<span class="t " style="left:152.70px;top:854.87px;font-size:26.65px;line-height:52px;color:#3a3a3a;font-weight:400;letter-spacing:0.065px;-webkit-text-stroke:0.35px #3a3a3a;">Preview Content</span>
<span class="t " style="left:485.00px;top:505.83px;font-size:23.57px;line-height:46px;color:#fff;font-weight:700;letter-spacing:-0.479px;-webkit-text-stroke:0.2px #fff;">M</span>
<span class="t " style="left:28.70px;top:922.27px;font-size:26.65px;line-height:52px;color:#b4b4b4;font-weight:700;letter-spacing:-0.188px;-webkit-text-stroke:0.2px #b4b4b4;">Package Dependencies</span>
<svg style="position:absolute;left:32.3px;top:978.7px;" width="11.4" height="18.0" viewBox="-5.7 -9.0 11.4 18.0" preserveAspectRatio="none"><path d="M-3.7,-7.0 L3.7,0 L-3.7,7.0" fill="none" stroke="#6f6f6f" stroke-width="2.5" stroke-linecap="round" stroke-linejoin="round"/></svg>
<svg style="position:absolute;left:20px;top:960px;" width="70" height="50" viewBox="0 0 70 50" preserveAspectRatio="none"><path d="M38.3,20.5 L43.5,17.5 L54.3,24.5 L49.9,26.8 Z" fill="#ad7d3a" stroke="#ad7d3a" stroke-width="0.8" stroke-linejoin="round"/><path d="M45.6,16.3 L48.6,14.6 Q49.9,14 51.2,14.7 L61.4,20.7 L57.4,22.6 Z" fill="#ad7d3a" stroke="#ad7d3a" stroke-width="0.8" stroke-linejoin="round"/><path d="M37.4,22.8 L48.6,29.3 V41.5 L38.9,35.9 Q37.4,35 37.4,33.4 Z" fill="#ad7d3a" stroke="#ad7d3a" stroke-width="0.8" stroke-linejoin="round"/><path d="M62.4,22.8 L51.4,29.3 V41.5 L60.9,35.9 Q62.4,35 62.4,33.4 Z" fill="#ad7d3a" stroke="#ad7d3a" stroke-width="0.8" stroke-linejoin="round"/></svg>
<span class="t " style="left:96.30px;top:962.87px;font-size:26.65px;line-height:52px;color:#3a3a3a;font-weight:400;letter-spacing:-0.145px;-webkit-text-stroke:0.35px #3a3a3a;">KeychainAccess</span>
<span class="t " style="left:300.60px;top:962.87px;font-size:26.65px;line-height:52px;color:#7b7b7b;font-weight:400;letter-spacing:-0.155px;-webkit-text-stroke:0.35px #7b7b7b;">4.2.2</span>
<svg style="position:absolute;left:32.3px;top:1022.7px;" width="11.4" height="18.0" viewBox="-5.7 -9.0 11.4 18.0" preserveAspectRatio="none"><path d="M-3.7,-7.0 L3.7,0 L-3.7,7.0" fill="none" stroke="#6f6f6f" stroke-width="2.5" stroke-linecap="round" stroke-linejoin="round"/></svg>
<svg style="position:absolute;left:20px;top:1004px;" width="70" height="50" viewBox="0 0 70 50" preserveAspectRatio="none"><path d="M38.3,20.5 L43.5,17.5 L54.3,24.5 L49.9,26.8 Z" fill="#ad7d3a" stroke="#ad7d3a" stroke-width="0.8" stroke-linejoin="round"/><path d="M45.6,16.3 L48.6,14.6 Q49.9,14 51.2,14.7 L61.4,20.7 L57.4,22.6 Z" fill="#ad7d3a" stroke="#ad7d3a" stroke-width="0.8" stroke-linejoin="round"/><path d="M37.4,22.8 L48.6,29.3 V41.5 L38.9,35.9 Q37.4,35 37.4,33.4 Z" fill="#ad7d3a" stroke="#ad7d3a" stroke-width="0.8" stroke-linejoin="round"/><path d="M62.4,22.8 L51.4,29.3 V41.5 L60.9,35.9 Q62.4,35 62.4,33.4 Z" fill="#ad7d3a" stroke="#ad7d3a" stroke-width="0.8" stroke-linejoin="round"/></svg>
<span class="t " style="left:96.30px;top:1006.87px;font-size:26.65px;line-height:52px;color:#3a3a3a;font-weight:400;letter-spacing:-0.279px;-webkit-text-stroke:0.35px #3a3a3a;">Supabase</span>
<span class="t " style="left:225.40px;top:1006.87px;font-size:26.65px;line-height:52px;color:#7b7b7b;font-weight:400;letter-spacing:-1.432px;-webkit-text-stroke:0.35px #7b7b7b;">2.10.1</span>
<svg style="position:absolute;left:32.3px;top:1066.7px;" width="11.4" height="18.0" viewBox="-5.7 -9.0 11.4 18.0" preserveAspectRatio="none"><path d="M-3.7,-7.0 L3.7,0 L-3.7,7.0" fill="none" stroke="#6f6f6f" stroke-width="2.5" stroke-linecap="round" stroke-linejoin="round"/></svg>
<svg style="position:absolute;left:20px;top:1048px;" width="70" height="50" viewBox="0 0 70 50" preserveAspectRatio="none"><path d="M38.3,20.5 L43.5,17.5 L54.3,24.5 L49.9,26.8 Z" fill="#ad7d3a" stroke="#ad7d3a" stroke-width="0.8" stroke-linejoin="round"/><path d="M45.6,16.3 L48.6,14.6 Q49.9,14 51.2,14.7 L61.4,20.7 L57.4,22.6 Z" fill="#ad7d3a" stroke="#ad7d3a" stroke-width="0.8" stroke-linejoin="round"/><path d="M37.4,22.8 L48.6,29.3 V41.5 L38.9,35.9 Q37.4,35 37.4,33.4 Z" fill="#ad7d3a" stroke="#ad7d3a" stroke-width="0.8" stroke-linejoin="round"/><path d="M62.4,22.8 L51.4,29.3 V41.5 L60.9,35.9 Q62.4,35 62.4,33.4 Z" fill="#ad7d3a" stroke="#ad7d3a" stroke-width="0.8" stroke-linejoin="round"/></svg>
<span class="t " style="left:96.30px;top:1050.87px;font-size:26.65px;line-height:52px;color:#3a3a3a;font-weight:400;letter-spacing:0.684px;-webkit-text-stroke:0.35px #3a3a3a;">swift-concurrency-extras</span>
<span class="t " style="left:412.70px;top:1050.87px;font-size:26.65px;line-height:52px;color:#7b7b7b;font-weight:400;letter-spacing:-1.915px;-webkit-text-stroke:0.35px #7b7b7b;">1.1.0</span>
<svg style="position:absolute;left:32.3px;top:1110.7px;" width="11.4" height="18.0" viewBox="-5.7 -9.0 11.4 18.0" preserveAspectRatio="none"><path d="M-3.7,-7.0 L3.7,0 L-3.7,7.0" fill="none" stroke="#6f6f6f" stroke-width="2.5" stroke-linecap="round" stroke-linejoin="round"/></svg>
<svg style="position:absolute;left:20px;top:1092px;" width="70" height="50" viewBox="0 0 70 50" preserveAspectRatio="none"><path d="M38.3,20.5 L43.5,17.5 L54.3,24.5 L49.9,26.8 Z" fill="#ad7d3a" stroke="#ad7d3a" stroke-width="0.8" stroke-linejoin="round"/><path d="M45.6,16.3 L48.6,14.6 Q49.9,14 51.2,14.7 L61.4,20.7 L57.4,22.6 Z" fill="#ad7d3a" stroke="#ad7d3a" stroke-width="0.8" stroke-linejoin="round"/><path d="M37.4,22.8 L48.6,29.3 V41.5 L38.9,35.9 Q37.4,35 37.4,33.4 Z" fill="#ad7d3a" stroke="#ad7d3a" stroke-width="0.8" stroke-linejoin="round"/><path d="M62.4,22.8 L51.4,29.3 V41.5 L60.9,35.9 Q62.4,35 62.4,33.4 Z" fill="#ad7d3a" stroke="#ad7d3a" stroke-width="0.8" stroke-linejoin="round"/></svg>
<span class="t " style="left:96.30px;top:1094.87px;font-size:26.65px;line-height:52px;color:#3a3a3a;font-weight:400;letter-spacing:0.913px;-webkit-text-stroke:0.35px #3a3a3a;">swift-crypto</span>
<span class="t " style="left:253.20px;top:1094.87px;font-size:26.65px;line-height:52px;color:#7b7b7b;font-weight:400;letter-spacing:-0.295px;-webkit-text-stroke:0.35px #7b7b7b;">3.4.0</span>
<svg style="position:absolute;left:22px;top:1848px;" width="26" height="26" viewBox="-13 -13 26 26" preserveAspectRatio="none"><path d="M-10,0 H10 M0,-10 V10" stroke="#4a4a4a" stroke-width="2.4" stroke-linecap="round"/></svg>
<div style="position:absolute;left:56.5px;top:1839px;width:476.5px;height:42px;background:#e7e7e7;border-radius:11px;box-shadow:inset 0 0 0 1px #d2d2d2;"></div>
<svg style="position:absolute;left:64px;top:1846px;" width="56" height="30" viewBox="64 1846 56 30" preserveAspectRatio="none"><rect x="66.6" y="1849" width="49" height="23" rx="11.5" fill="none" stroke="#666" stroke-width="1.8"/><path d="M74.5,1856.2 H88 M76.8,1860.4 H85.7 M79,1864.6 H83.5" stroke="#555" stroke-width="1.7" stroke-linecap="round"/><path d="M97.3,1858.4 L101.8,1862.8 L106.3,1858.4" fill="none" stroke="#555" stroke-width="2" stroke-linecap="round" stroke-linejoin="round"/></svg>
<span class="t " style="left:124.80px;top:1838.19px;font-size:22.55px;line-height:44px;color:#b3b3b3;font-weight:400;letter-spacing:0.148px;-webkit-text-stroke:0.35px #b3b3b3;">Filter</span>
<svg style="position:absolute;left:460px;top:1846px;" width="30" height="30" viewBox="460 1846 30 30" preserveAspectRatio="none"><circle cx="474.7" cy="1860.3" r="12" fill="none" stroke="#666" stroke-width="1.8"/><path d="M475.5,1853 V1861 H469" fill="none" stroke="#666" stroke-width="1.8" stroke-linecap="round" stroke-linejoin="round"/></svg>
<svg style="position:absolute;left:494px;top:1845px;" width="30" height="30" viewBox="494 1845 30 30" preserveAspectRatio="none"><rect x="496.9" y="1848" width="24" height="24" rx="2.5" fill="none" stroke="#666" stroke-width="1.8"/><path d="M501.4,1860 H508.2 M504.8,1856.6 V1863.4 M511.8,1860 H517" stroke="#666" stroke-width="1.7" stroke-linecap="round"/></svg>
<div id="ed" style="position:absolute;left:546px;top:190px;width:2478px;height:1642px;overflow:hidden;">
<div style="position:absolute;left:0px;top:530px;width:2478px;height:44px;background:#edf4fe;"></div>
<div style="position:absolute;left:106px;top:4px;width:14px;height:260px;background:#e8e8e8;border-radius:7px 7px 7px 7px;"></div>
<div style="position:absolute;left:106px;top:400px;width:14px;height:1274px;background:#e8e8e8;border-radius:7px 7px 0 0;"></div>
<div style="position:absolute;left:106px;top:1015px;width:14px;height:659px;background:#d3d3d3;border-radius:7px 7px 0 0;box-shadow:0 -1.5px 0 0 rgba(255,255,255,.55);"></div>
<div style="position:absolute;left:106px;top:1059px;width:14px;height:615px;background:#bfbfbf;border-radius:7px 7px 0 0;box-shadow:0 -1.5px 0 0 rgba(255,255,255,.55);"></div>
<div style="position:absolute;left:106px;top:1147px;width:14px;height:527px;background:#aeaeae;border-radius:7px 7px 0 0;box-shadow:0 -1.5px 0 0 rgba(255,255,255,.55);"></div>
<div style="position:absolute;left:106px;top:1323px;width:14px;height:217px;background:#9f9f9f;border-radius:7px 7px 7px 7px;box-shadow:0 0 0 1.2px rgba(255,255,255,.45);"></div>
<div style="position:absolute;left:106px;top:1367px;width:14px;height:129px;background:#919191;border-radius:7px 7px 7px 7px;box-shadow:0 0 0 1.2px rgba(255,255,255,.45);"></div>
<div style="position:absolute;left:106px;top:1234px;width:14px;height:44px;background:#7b7b7b;"></div>
<svg style="position:absolute;left:106px;top:1234px" width="14" height="44" viewBox="0 0 14 44"><path d="M4.6,17.6 L9.2,22 L4.6,26.4" fill="none" stroke="#e6e6e6" stroke-width="2.2" stroke-linecap="round" stroke-linejoin="round"/></svg>
<div style="position:absolute;left:106px;top:530px;width:14px;height:44px;background:#d6dde9;"></div>
<div style="position:absolute;left:14px;top:530px;width:10px;height:44px;background:#a8c3fa;border-radius:5px;box-shadow:inset 0 0 0 2px #3273f6;box-sizing:border-box;"></div>
<svg style="position:absolute;left:12px;top:1580px" width="14" height="14" viewBox="0 0 14 14"><circle cx="7.2" cy="7" r="4.1" fill="#a8c3fa" stroke="#3a7bf7" stroke-width="1.8"/></svg>
<span class="t" style="right:2380.80px;top:-8.91px;font-size:31.5px;line-height:64px;color:#a3a3a3;letter-spacing:0px;transform:scaleX(.89);transform-origin:100% 50%;">1</span>
<span class="t" style="right:2380.80px;top:35.09px;font-size:31.5px;line-height:64px;color:#a3a3a3;letter-spacing:0px;transform:scaleX(.89);transform-origin:100% 50%;">2</span>
<span class="t" style="right:2380.80px;top:81.09px;font-size:31.5px;line-height:64px;color:#a3a3a3;letter-spacing:0px;transform:scaleX(.89);transform-origin:100% 50%;">3</span>
<span class="t" style="right:2380.80px;top:123.09px;font-size:31.5px;line-height:64px;color:#a3a3a3;letter-spacing:0px;transform:scaleX(.89);transform-origin:100% 50%;">4</span>
<span class="t" style="right:2380.80px;top:167.09px;font-size:31.5px;line-height:64px;color:#a3a3a3;letter-spacing:0px;transform:scaleX(.89);transform-origin:100% 50%;">5</span>
<span class="t" style="right:2380.80px;top:211.09px;font-size:31.5px;line-height:64px;color:#a3a3a3;letter-spacing:0px;transform:scaleX(.89);transform-origin:100% 50%;">6</span>
<span class="t" style="right:2380.80px;top:255.09px;font-size:31.5px;line-height:64px;color:#a3a3a3;letter-spacing:0px;transform:scaleX(.89);transform-origin:100% 50%;">7</span>
<span class="t" style="right:2380.80px;top:300.09px;font-size:31.5px;line-height:64px;color:#a3a3a3;letter-spacing:0px;transform:scaleX(.89);transform-origin:100% 50%;">8</span>
<span class="t" style="right:2380.80px;top:343.09px;font-size:31.5px;line-height:64px;color:#a3a3a3;letter-spacing:0px;transform:scaleX(.89);transform-origin:100% 50%;">9</span>
<span class="t" style="right:2380.80px;top:388.09px;font-size:31.5px;line-height:64px;color:#a3a3a3;letter-spacing:0px;transform:scaleX(.89);transform-origin:100% 50%;">10</span>
<span class="t" style="right:2380.80px;top:431.09px;font-size:31.5px;line-height:64px;color:#a3a3a3;letter-spacing:0px;transform:scaleX(.89);transform-origin:100% 50%;">11</span>
<span class="t" style="right:2380.80px;top:475.09px;font-size:31.5px;line-height:64px;color:#a3a3a3;letter-spacing:0px;transform:scaleX(.89);transform-origin:100% 50%;">12</span>
<span class="t" style="right:2380.80px;top:521.09px;font-size:31.5px;line-height:64px;color:#1d1d1d;letter-spacing:0px;transform:scaleX(.89);transform-origin:100% 50%;">13</span>
<span class="t" style="right:2380.80px;top:563.09px;font-size:31.5px;line-height:64px;color:#a3a3a3;letter-spacing:0px;transform:scaleX(.89);transform-origin:100% 50%;">14</span>
<span class="t" style="right:2380.80px;top:607.09px;font-size:31.5px;line-height:64px;color:#a3a3a3;letter-spacing:0px;transform:scaleX(.89);transform-origin:100% 50%;">15</span>
<span class="t" style="right:2380.80px;top:651.09px;font-size:31.5px;line-height:64px;color:#a3a3a3;letter-spacing:0px;transform:scaleX(.89);transform-origin:100% 50%;">16</span>
<span class="t" style="right:2380.80px;top:695.09px;font-size:31.5px;line-height:64px;color:#a3a3a3;letter-spacing:0px;transform:scaleX(.89);transform-origin:100% 50%;">17</span>
<span class="t" style="right:2380.80px;top:739.09px;font-size:31.5px;line-height:64px;color:#a3a3a3;letter-spacing:0px;transform:scaleX(.89);transform-origin:100% 50%;">18</span>
<span class="t" style="right:2380.80px;top:783.09px;font-size:31.5px;line-height:64px;color:#a3a3a3;letter-spacing:0px;transform:scaleX(.89);transform-origin:100% 50%;">19</span>
<span class="t" style="right:2380.80px;top:827.09px;font-size:31.5px;line-height:64px;color:#a3a3a3;letter-spacing:0px;transform:scaleX(.89);transform-origin:100% 50%;">20</span>
<span class="t" style="right:2380.80px;top:871.09px;font-size:31.5px;line-height:64px;color:#a3a3a3;letter-spacing:0px;transform:scaleX(.89);transform-origin:100% 50%;">21</span>
<span class="t" style="right:2380.80px;top:915.09px;font-size:31.5px;line-height:64px;color:#a3a3a3;letter-spacing:0px;transform:scaleX(.89);transform-origin:100% 50%;">22</span>
<span class="t" style="right:2380.80px;top:959.09px;font-size:31.5px;line-height:64px;color:#a3a3a3;letter-spacing:0px;transform:scaleX(.89);transform-origin:100% 50%;">23</span>
<span class="t" style="right:2380.80px;top:1003.09px;font-size:31.5px;line-height:64px;color:#a3a3a3;letter-spacing:0px;transform:scaleX(.89);transform-origin:100% 50%;">24</span>
<span class="t" style="right:2380.80px;top:1049.09px;font-size:31.5px;line-height:64px;color:#a3a3a3;letter-spacing:0px;transform:scaleX(.89);transform-origin:100% 50%;">25</span>
<span class="t" style="right:2380.80px;top:1091.09px;font-size:31.5px;line-height:64px;color:#a3a3a3;letter-spacing:0px;transform:scaleX(.89);transform-origin:100% 50%;">26</span>
<span class="t" style="right:2380.80px;top:1135.09px;font-size:31.5px;line-height:64px;color:#a3a3a3;letter-spacing:0px;transform:scaleX(.89);transform-origin:100% 50%;">27</span>
<span class="t" style="right:2380.80px;top:1179.09px;font-size:31.5px;line-height:64px;color:#a3a3a3;letter-spacing:0px;transform:scaleX(.89);transform-origin:100% 50%;">28</span>
<span class="t" style="right:2380.80px;top:1223.09px;font-size:31.5px;line-height:64px;color:#a3a3a3;letter-spacing:0px;transform:scaleX(.89);transform-origin:100% 50%;">29</span>
<span class="t" style="right:2380.80px;top:1267.09px;font-size:31.5px;line-height:64px;color:#a3a3a3;letter-spacing:0px;transform:scaleX(.89);transform-origin:100% 50%;">44</span>
<span class="t" style="right:2380.80px;top:1311.09px;font-size:31.5px;line-height:64px;color:#a3a3a3;letter-spacing:0px;transform:scaleX(.89);transform-origin:100% 50%;">45</span>
<span class="t" style="right:2380.80px;top:1355.09px;font-size:31.5px;line-height:64px;color:#a3a3a3;letter-spacing:0px;transform:scaleX(.89);transform-origin:100% 50%;">46</span>
<span class="t" style="right:2380.80px;top:1399.09px;font-size:31.5px;line-height:64px;color:#a3a3a3;letter-spacing:0px;transform:scaleX(.89);transform-origin:100% 50%;">47</span>
<span class="t" style="right:2380.80px;top:1443.09px;font-size:31.5px;line-height:64px;color:#a3a3a3;letter-spacing:0px;transform:scaleX(.89);transform-origin:100% 50%;">48</span>
<span class="t" style="right:2380.80px;top:1487.09px;font-size:31.5px;line-height:64px;color:#a3a3a3;letter-spacing:0px;transform:scaleX(.89);transform-origin:100% 50%;">49</span>
<span class="t" style="right:2380.80px;top:1531.09px;font-size:31.5px;line-height:64px;color:#a3a3a3;letter-spacing:0px;transform:scaleX(.89);transform-origin:100% 50%;">50</span>
<span class="t" style="right:2380.80px;top:1575.09px;font-size:31.5px;line-height:64px;color:#a3a3a3;letter-spacing:0px;transform:scaleX(.89);transform-origin:100% 50%;">51</span>
<div class="cl" style="left:144.90px;top:3px;"><span class="c">//</span></div>
<div class="cl" style="left:144.90px;top:47px;"><span class="c">//  LandingView.swift</span></div>
<div class="cl" style="left:144.90px;top:91px;"><span class="c">//  TodoList</span></div>
<div class="cl" style="left:144.90px;top:135px;"><span class="c">//</span></div>
<div class="cl" style="left:144.90px;top:179px;"><span class="c">//  Created by Russell Gordon on 2024<span class="hy">-</span>04<span class="hy">-</span>08.</span></div>
<div class="cl" style="left:144.90px;top:223px;"><span class="c">//</span></div>
<div class="cl" style="left:144.90px;top:311px;"><span class="k">import</span> SwiftUI</div>
<div class="cl" style="left:144.90px;top:399px;"><span class="k">struct</span> <span class="td">LandingView</span>: <span class="st">View</span> {</div>
<div class="cl" style="left:144.90px;top:487px;">    <span class="c">// </span><span class="mk">MARK: Stored properties</span></div>
<div class="cl" style="left:144.90px;top:575px;">    <span class="c">// The search text</span></div>
<div class="cl" style="left:144.90px;top:619px;">    <span class="st">@State</span> <span class="k">var</span> <span class="od">searchText</span> = <span class="s">&quot;&quot;</span></div>
<div class="cl" style="left:144.90px;top:707px;">    <span class="c">// The view model</span></div>
<div class="cl" style="left:144.90px;top:751px;">    <span class="st">@State</span> <span class="k">var</span> <span class="od">viewModel</span> = <span class="pc">TodoListViewModel</span>()</div>
<div class="cl" style="left:144.90px;top:839px;">    <span class="c">// Is the sheet to add a new to<span class="hy">-</span>do item showing right now?</span></div>
<div class="cl" style="left:144.90px;top:883px;">    <span class="st">@State</span> <span class="k">var</span> <span class="od">presentingNewItemSheet</span> = <span class="k">false</span></div>
<div class="cl" style="left:144.90px;top:971px;">    <span class="c">// </span><span class="mk">MARK: Computed properties</span></div>
<div class="cl" style="left:144.90px;top:1015px;">    <span class="k">var</span> <span class="od">body</span>: <span class="k">some</span> <span class="st">View</span> {</div>
<div class="cl" style="left:144.90px;top:1059px;">        <span class="st">NavigationView</span> {</div>
<div class="cl" style="left:144.90px;top:1147px;">            <span class="st">VStack</span> {</div>
<div class="cl" style="left:144.90px;top:1235px;">                <span class="st">List</span>(<span class="pv">$viewModel</span>.<span class="pv">todos</span>) {<span class="fold"><i></i><em>•••</em></span>}</div>
<div class="cl" style="left:144.90px;top:1279px;">                .<span class="sf">searchable</span>(<span class="sf">text</span>: <span class="pv">$searchText</span>)</div>
<div class="cl" style="left:144.90px;top:1323px;">                .<span class="sf">onChange</span>(<span class="sf">of</span>: <span class="pv">searchText</span>) {</div>
<div class="cl" style="left:144.90px;top:1367px;">                    <span class="st">Task</span> {</div>
<div class="cl" style="left:144.90px;top:1411px;">                        <span class="k">try</span> <span class="k">await</span> <span class="pv">viewModel</span>.<span class="pv">filterTodos</span>(<span class="pv">on</span>: <span class="pv">searchText</span>)</div>
<div class="cl" style="left:144.90px;top:1455px;">                    }</div>
<div class="cl" style="left:144.90px;top:1499px;">                }</div>
<div class="cl" style="left:144.90px;top:1631px;">            }</div>
</div>
<svg style="position:absolute;left:566px;top:1848px;" width="36" height="26" viewBox="566 1848 36 26" preserveAspectRatio="none"><path d="M572,1851.8 H590.6 Q592.2,1851.8 593.2,1853 L597.8,1859.2 Q598.8,1860.9 597.8,1862.6 L593.2,1868.8 Q592.2,1870 590.6,1870 H572 Q569,1870 569,1867 V1854.8 Q569,1851.8 572,1851.8 Z" fill="#3478f6"/></svg>
<div style="position:absolute;left:614px;top:1849.5px;width:2px;height:23px;background:#dcdcdc;"></div>
<svg style="position:absolute;left:634px;top:1846px;" width="24" height="30" viewBox="634 1846 24 30" preserveAspectRatio="none"><rect x="638" y="1849.1" width="4.4" height="23.8" rx="1.6" fill="none" stroke="#5c5c5c" stroke-width="1.7"/><rect x="650.2" y="1849.1" width="4.4" height="23.8" rx="1.6" fill="none" stroke="#5c5c5c" stroke-width="1.7"/></svg>
<svg style="position:absolute;left:690px;top:1846px;" width="34" height="30" viewBox="690 1846 34 30" preserveAspectRatio="none"><path d="M693.6,1865.2 L706,1852.8 L718.2,1865 M718.4,1858 V1865 H711.4" fill="none" stroke="#b8b8b8" stroke-width="1.8" stroke-linejoin="miter" stroke-linecap="butt"/><rect x="698.2" y="1869.3" width="16" height="3.4" fill="none" stroke="#b8b8b8" stroke-width="1.8" stroke-linejoin="miter" stroke-linecap="butt"/></svg>
<svg style="position:absolute;left:752px;top:1846px;" width="28" height="30" viewBox="752 1846 28 30" preserveAspectRatio="none"><path d="M766,1848.4 V1865 M759,1858.6 L766,1865.6 L773,1858.6" fill="none" stroke="#b8b8b8" stroke-width="1.8" stroke-linejoin="miter" stroke-linecap="butt"/><rect x="758.4" y="1869.3" width="15.4" height="3.4" fill="none" stroke="#b8b8b8" stroke-width="1.8" stroke-linejoin="miter" stroke-linecap="butt"/></svg>
<svg style="position:absolute;left:812px;top:1846px;" width="28" height="30" viewBox="812 1846 28 30" preserveAspectRatio="none"><path d="M825.9,1866 V1849.6 M818.9,1856.2 L825.9,1849.2 L832.9,1856.2" fill="none" stroke="#b8b8b8" stroke-width="1.8" stroke-linejoin="miter" stroke-linecap="butt"/><rect x="818.3" y="1869.3" width="15.4" height="3.4" fill="none" stroke="#b8b8b8" stroke-width="1.8" stroke-linejoin="miter" stroke-linecap="butt"/></svg>
<div style="position:absolute;left:856px;top:1849.5px;width:2px;height:23px;background:#dcdcdc;"></div>
<svg style="position:absolute;left:874px;top:1845px;" width="28" height="32" viewBox="874 1845 28 32" preserveAspectRatio="none"><path d="M886.4,1859.6 L898.2,1854.6 V1868.8 L886.4,1874.2 Z" fill="none" stroke="#6f6f6f" stroke-width="1.8" stroke-linejoin="round" stroke-linecap="round"/><path d="M882,1871 V1857.4 L893.8,1851.6 M877.7,1869 V1854.9 L889.8,1848.8" fill="none" stroke="#6f6f6f" stroke-width="1.8" stroke-linejoin="round" stroke-linecap="round"/></svg>
<svg style="position:absolute;left:932px;top:1845px;" width="32" height="32" viewBox="932 1845 32 32" preserveAspectRatio="none"><path d="M943.6,1854.9 L952.8,1859.3 M943.6,1867.5 L952.8,1863" fill="none" stroke="#6f6f6f" stroke-width="1.8" stroke-linejoin="round" stroke-linecap="round"/><circle cx="940.1" cy="1853.1" r="3.9" fill="none" stroke="#6f6f6f" stroke-width="1.8" stroke-linejoin="round" stroke-linecap="round"/><circle cx="956.3" cy="1861.1" r="3.9" fill="none" stroke="#6f6f6f" stroke-width="1.8" stroke-linejoin="round" stroke-linecap="round"/><circle cx="940.1" cy="1869.3" r="3.9" fill="none" stroke="#6f6f6f" stroke-width="1.8" stroke-linejoin="round" stroke-linecap="round"/></svg>
<svg style="position:absolute;left:994px;top:1845px;" width="28" height="32" viewBox="994 1845 28 32" preserveAspectRatio="none"><rect x="998.2" y="1849.5" width="19.6" height="9.2" rx="4.6" fill="none" stroke="#6f6f6f" stroke-width="1.8" stroke-linejoin="round" stroke-linecap="round"/><rect x="998.2" y="1863.9" width="19.6" height="9.2" rx="4.6" fill="none" stroke="#6f6f6f" stroke-width="1.8" stroke-linejoin="round" stroke-linecap="round"/><circle cx="1003" cy="1854.1" r="2.6" fill="#6f6f6f"/><circle cx="1013.2" cy="1868.5" r="2.6" fill="#6f6f6f"/></svg>
<svg style="position:absolute;left:1052px;top:1845px;" width="32" height="32" viewBox="1052 1845 32 32" preserveAspectRatio="none"><path d="M1080.2,1849 L1057,1859.3 L1068.4,1861.2 L1070.3,1872.2 Z" fill="none" stroke="#6f6f6f" stroke-width="1.8" stroke-linejoin="round" stroke-linecap="round"/></svg>
<div style="position:absolute;left:1098px;top:1849.5px;width:2px;height:23px;background:#dcdcdc;"></div>
<svg style="position:absolute;left:1118px;top:1849px;" width="23" height="23" viewBox="0 0 30 30" preserveAspectRatio="none"><rect x="0" y="0" width="30" height="30" rx="6.2" fill="#7b7b7b"/><g transform="translate(15 15) scale(1.0) translate(-15 -14.9)"><g fill="none" stroke="#fff" stroke-width="2.5" stroke-linecap="round"><path d="M10.1,16.6 L16.4,7.4"/><path d="M7.4,22.3 L8.9,20.5"/><path d="M12.7,7.4 L21.9,22.4"/><path d="M6.2,18.3 H16.3"/><path d="M20.2,18.3 H23.9"/></g></g></svg>
<span class="t " style="left:1155.40px;top:1839.49px;font-size:22.55px;line-height:44px;color:#1d1d1d;font-weight:400;letter-spacing:0.139px;-webkit-text-stroke:0.35px #1d1d1d;">TodoList</span>
<span class="t " style="left:2775.00px;top:1838.99px;font-size:22.55px;line-height:44px;color:#7c7c7c;font-weight:400;letter-spacing:0.488px;-webkit-text-stroke:0.35px #7c7c7c;">Line: 13  Col: 5</span>
<div style="position:absolute;left:2954px;top:1849.5px;width:2px;height:23px;background:#dcdcdc;"></div>
<svg style="position:absolute;left:2970px;top:1845px;" width="32" height="32" viewBox="2970 1845 32 32" preserveAspectRatio="none"><rect x="2974" y="1849.6" width="23.8" height="23" rx="4.5" fill="none" stroke="#6f6f6f" stroke-width="2"/><rect x="2977.3" y="1864.3" width="17.4" height="6.5" rx="1.8" fill="#6f6f6f"/></svg>
</div></body></html>
